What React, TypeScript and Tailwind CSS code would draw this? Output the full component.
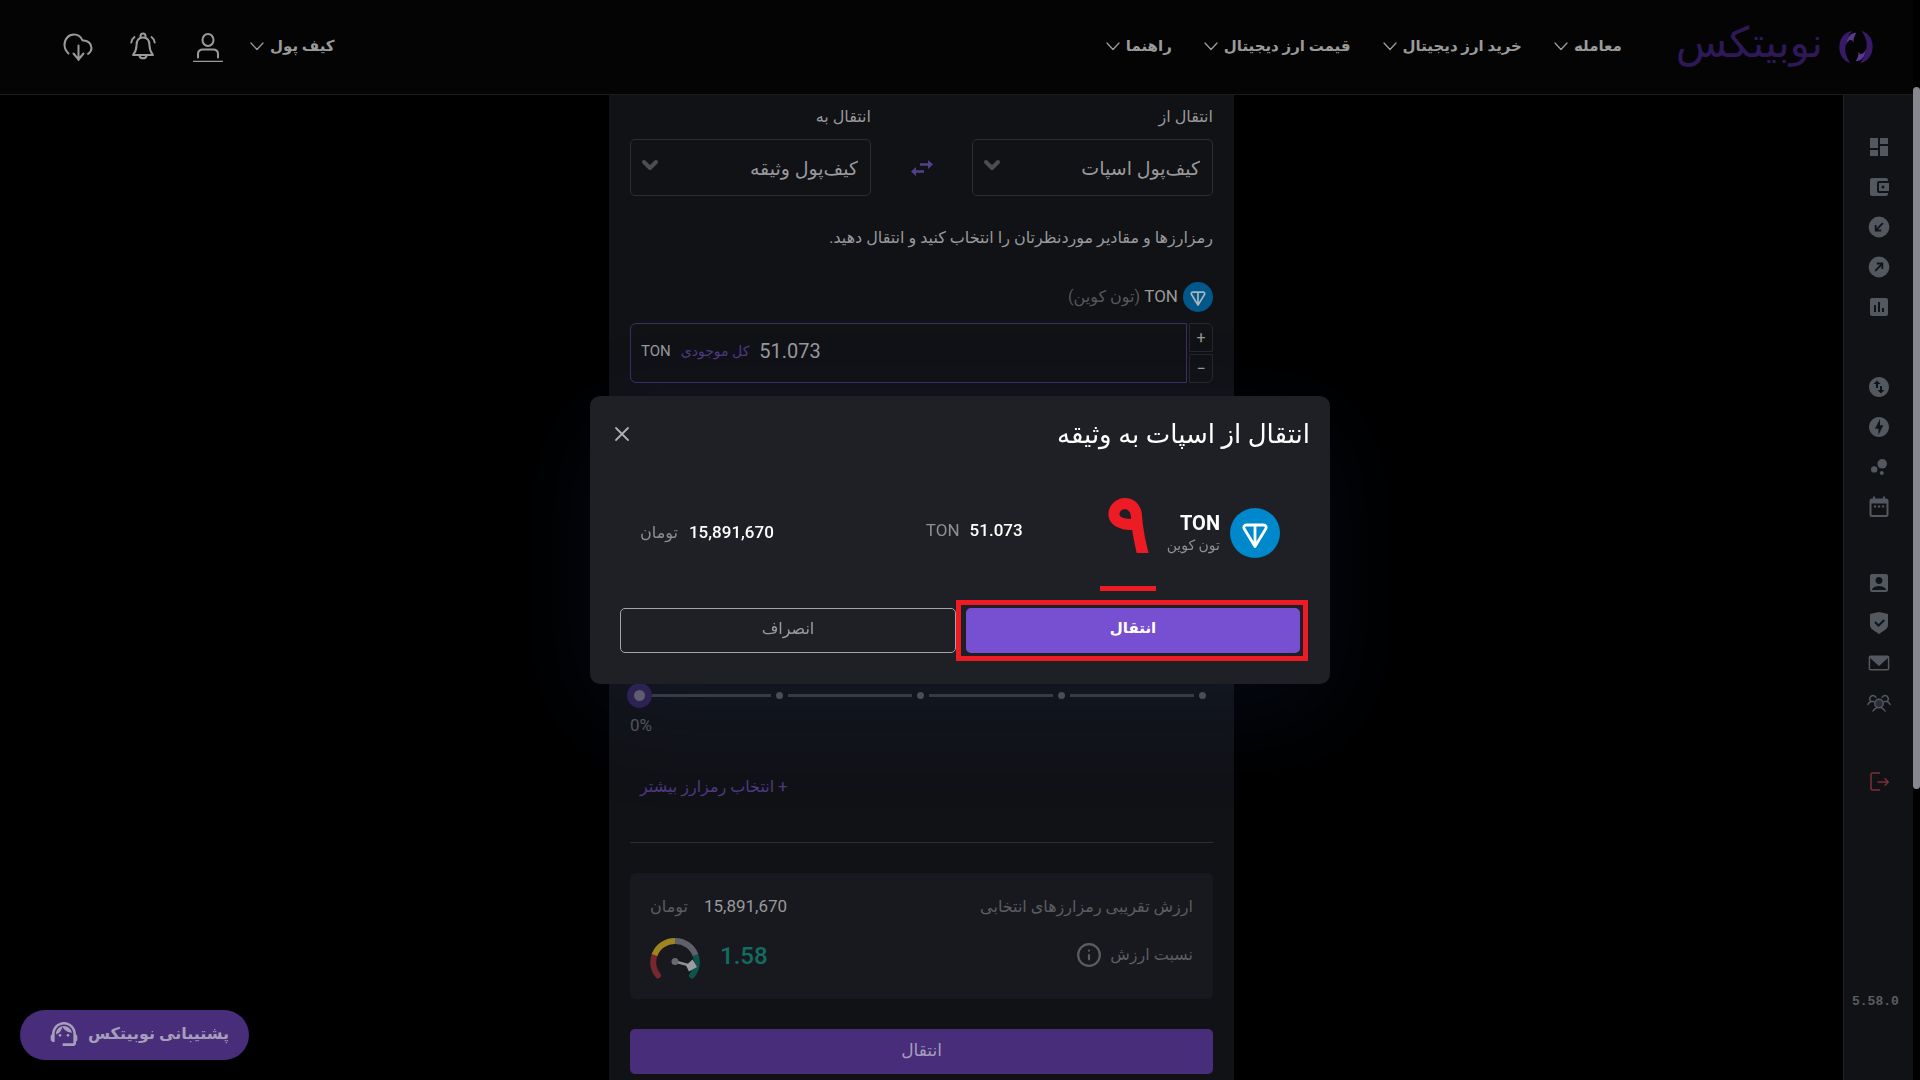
import type { ReactNode } from 'react'
import { ChevronDown, Info, X } from 'lucide-react'
import {
    MdAccountBalanceWallet,
    MdAccountBox,
    MdBubbleChart,
    MdDashboard,
    MdInsertChart,
    MdOfflineBolt,
    MdSupportAgent,
    MdSwapVerticalCircle,
} from 'react-icons/md'
import { RiShieldCheckFill } from 'react-icons/ri'

const navItems = ['معامله', 'خرید ارز دیجیتال', 'قیمت ارز دیجیتال', 'راهنما']

function LogoMark() {
    return (
        <svg viewBox="0 0 100 96" className="w-[34px] h-8" aria-hidden="true">
            {['', 'rotate(180 50 48)'].map((t) => (
                <g key={t} transform={t || undefined}>
                    <path d="M38 0C12 4 0 26 0 50c0 22 14 42 34 46C24 84 16 66 18 48 20 30 28 12 38 0Z" fill="#381a69" />
                    <path d="M51 5C34 5 22 18 20 44c3-12 9-18 16-17 4 1 4 6 8 7C40 26 46 14 51 5Z" fill="#58398c" />
                </g>
            ))}
        </svg>
    )
}

function MenuChevron() {
    return (
        <svg viewBox="0 0 14 9" className="w-[14px] h-[9px]" fill="none" stroke="currentColor" strokeWidth="1.300" strokeLinecap="round" strokeLinejoin="round">
            <path d="m1 1 6 6.500L13 1" />
        </svg>
    )
}

function CloudDownloadIcon() {
    return (
        <svg viewBox="0 0 30 30" className="size-[30px]" fill="none" stroke="currentColor" strokeWidth="2" strokeLinecap="round" strokeLinejoin="round">
            <path d="M5.500 21.500C3 19 1.500 16.500 1.500 13c0-6 4-10.500 9.500-10.500 4 0 7 2.200 8.500 6 5-.5 9 3 9 7.500 0 2.500-1.500 4.500-3.500 6" />
            <path d="M15.500 13.500V28M10.500 21.500l5 6 5-6" />
        </svg>
    )
}

function BellIcon() {
    return (
        <svg viewBox="0 0 30 30" className="size-[30px]" fill="none" stroke="currentColor" strokeWidth="2" strokeLinecap="round" strokeLinejoin="round">
            <path d="M15 5.500c-5 0-6.500 4-6.500 8 0 5-1.500 7-3.500 9.500h20c-2-2.500-3.500-4.500-3.500-9.500 0-4-1.500-8-6.500-8Z" />
            <path d="M12.500 5.500V4a2.500 2.500 0 0 1 5 0v1.500M11.500 24c.5 3 6.500 3 7 0M6.500 5C4.500 6.500 3.500 8 3.300 10.500M23.500 5c2 1.500 3 3 3.200 5.500" />
        </svg>
    )
}

function UserIcon() {
    return (
        <svg viewBox="0 0 30 30" className="size-[30px]" fill="none" stroke="currentColor" strokeWidth="2" strokeLinecap="round">
            <ellipse cx="15" cy="8" rx="5.500" ry="6" />
            <path d="M5 25.500V22c0-3 2-4.500 5-4.500h10c3 0 5 1.500 5 4.500v3.500" />
            <path d="M0 29.300h30" strokeWidth="1.200" />
        </svg>
    )
}

function CircleArrowIcon({ up = false }: { up?: boolean }) {
    return (
        <svg viewBox="0 0 24 24" className="size-6">
            <circle cx="12" cy="12" r="10.400" fill="currentColor" />
            <g fill="none" stroke="#111216" strokeWidth="1.800" transform={up ? 'rotate(180 12 12)' : undefined}>
                <path d="M15.800 8.200 8.700 15.300M8.700 10v5.500h5.500" />
            </g>
        </svg>
    )
}

function CalendarIcon() {
    return (
        <svg viewBox="0 0 24 24" className="size-6" fill="none" stroke="currentColor">
            <rect x="3.500" y="4.500" width="17" height="16.500" rx="1.500" strokeWidth="2" />
            <path d="M3 6.500h18" strokeWidth="4" />
            <path d="M7 1.500v3M17 1.500v3" strokeWidth="2" />
            <path d="M7 11.500h2.200M11 11.500h2.200M15 11.500h2.200" strokeWidth="2" />
        </svg>
    )
}

function MailIcon() {
    return (
        <svg viewBox="0 0 24 24" className="size-6">
            <rect x="2.400" y="5.300" width="19.200" height="13.400" rx="1" fill="none" stroke="currentColor" strokeWidth="1.500" />
            <path d="M3 5h18v2l-9 8-9-8Z" fill="currentColor" />
        </svg>
    )
}

function ReferralIcon() {
    return (
        <svg viewBox="0 0 24 24" className="size-6" fill="none" stroke="currentColor" strokeWidth="1.500" strokeLinecap="round">
            <circle cx="12" cy="12.500" r="4.200" fill="#2b2e34" />
            <path d="M6 20c1-2 2.500-3 4-3.300M18 20c-1-2-2.500-3-4-3.300" />
            <path d="M9 6.500A3.300 3.300 0 1 0 4 10.500h3M15 6.500a3.300 3.300 0 1 1 5 4h-3M4 10.500C2.500 11 1.500 12 .8 13.500M20 10.500c1.500.5 2.500 1.500 3.200 3" />
        </svg>
    )
}

function LogoutIcon() {
    return (
        <svg viewBox="0 0 24 24" className="size-6" fill="none" stroke="currentColor" strokeWidth="1.500" strokeLinecap="round" strokeLinejoin="round">
            <path d="M12.500 3H5.500A1.500 1.500 0 0 0 4 4.500v14A1.500 1.500 0 0 0 5.500 20h7M11 12h10M18 8.800l3.300 3.200-3.300 3.200" />
        </svg>
    )
}

function TonIcon({ dim = false }: { dim?: boolean }) {
    return (
        <svg viewBox="0 0 50 50" className="size-full" aria-hidden="true">
            <circle cx="25" cy="25" r="25" fill={dim ? '#02588a' : '#0088cc'} />
            <path
                d="M16.500 17h17c2.200 0 3.400 2 2.300 3.800L25 38.500 14.200 20.800C13.100 19 14.300 17 16.500 17ZM25 17v20"
                fill="none"
                stroke={dim ? '#a9b6bd' : '#fff'}
                strokeWidth="2.800"
                strokeLinejoin="round"
            />
        </svg>
    )
}

function SwapIcon() {
    return (
        <svg viewBox="0 0 22 16" className="w-[22px] h-4" fill="#54408a">
            <path d="M9 3.200h8V0l5 4.500L17 9V5.800H9ZM13 10.200H5V7L0 11.500 5 16v-3.200h8Z" />
        </svg>
    )
}

function Gauge() {
    return (
        <svg viewBox="0 0 50 42" className="w-[50px] h-[42px]" fill="none" strokeWidth="6" aria-hidden="true">
            <path d="M8 38.500A21.500 21.500 0 0 1 4.500 18" stroke="#77272f" strokeLinecap="round" />
            <path d="M42 38.500A21.500 21.500 0 0 0 45.500 18" stroke="#0f534b" strokeLinecap="round" />
            <path d="M4.500 18A21.500 21.500 0 0 1 25 4" stroke="#a08420" />
            <path d="M45.500 18A21.500 21.500 0 0 0 25 4" stroke="#5f6069" />
            <path d="M25 24.500 38 28" stroke="#8d8e91" strokeWidth="2.500" />
            <circle cx="25" cy="24.500" r="3.500" fill="#68696d" />
            <path d="M36 28.500l6.500-6L47 30l-8 4.500Z" fill="#9c9da0" />
        </svg>
    )
}

const sideGroups: { label: string; icon: ReactNode }[][] = [
    [
        { label: 'داشبورد', icon: <MdDashboard className="size-6" /> },
        { label: 'کیف پول', icon: <MdAccountBalanceWallet className="size-6" /> },
        { label: 'واریز', icon: <CircleArrowIcon /> },
        { label: 'برداشت', icon: <CircleArrowIcon up /> },
        { label: 'گزارش', icon: <MdInsertChart className="size-6" /> },
    ],
    [
        { label: 'تبدیل', icon: <MdSwapVerticalCircle className="size-6" /> },
        { label: 'معامله سریع', icon: <MdOfflineBolt className="size-6" /> },
        { label: 'استخر', icon: <MdBubbleChart className="size-6" /> },
        { label: 'تاریخچه', icon: <CalendarIcon /> },
    ],
    [
        { label: 'پروفایل', icon: <MdAccountBox className="size-6" /> },
        { label: 'امنیت', icon: <RiShieldCheckFill className="size-6" /> },
        { label: 'پیام‌ها', icon: <MailIcon /> },
        { label: 'معرفی دوستان', icon: <ReferralIcon /> },
    ],
]

function Header() {
    return (
        <header className="h-[95px] px-[47px] flex items-center border-b border-[#1b1c20] bg-[#040405] text-[#9a9a9b]">
            <a href="#" className="flex items-center gap-4 ml-[54px] text-[#2f1858]">
                <LogoMark />
                <span className="text-[42px] leading-[56px] pb-2">نوبیتکس</span>
            </a>
            <nav className="flex items-center gap-8 font-bold text-[15px] pb-[2px]">
                {navItems.map((item) => (
                    <a key={item} href="#" className="flex items-center gap-[6px]">
                        {item}
                        <MenuChevron />
                    </a>
                ))}
            </nav>
            <div className="mr-auto flex items-center gap-[35px] pl-4">
                <a href="#" className="flex items-center gap-[6px] font-bold text-[15px] -ml-2 pb-[2px]">
                    کیف پول
                    <MenuChevron />
                </a>
                <button aria-label="حساب کاربری"><UserIcon /></button>
                <button aria-label="اعلان‌ها"><BellIcon /></button>
                <button aria-label="دانلود"><CloudDownloadIcon /></button>
            </div>
        </header>
    )
}

function Sidebar() {
    return (
        <aside className="w-[70px] shrink-0 bg-[#111216] border-l border-[#222327] text-[#53575e] flex flex-col items-center pt-10 gap-[52px]">
            {sideGroups.map((group, i) => (
                <nav key={i} className="flex flex-col gap-4 first:mb-1">
                    {group.map(({ label, icon }) => (
                        <a key={label} href="#" aria-label={label}>{icon}</a>
                    ))}
                </nav>
            ))}
            <button aria-label="خروج" className="mt-[3px] text-[#7d2f37]"><LogoutIcon /></button>
            <span dir="ltr" className="mt-auto mb-[68px] self-end pl-2 font-['Liberation_Mono',monospace] font-bold text-[13px] leading-5 text-[#5c5d61]">5.58.0</span>
        </aside>
    )
}

function WalletSelect({ id, label, value }: { id: string; label: string; value: string }) {
    return (
        <div className="w-[241px]">
            <label htmlFor={id} className="block h-6 leading-6 text-base">{label}</label>
            <div className="relative mt-[10px]">
                <select id={id} className="appearance-none w-full h-[57px] px-3 pt-1 rounded-[5px] border border-[#2d2e33] bg-transparent text-[19px]">
                    <option>{value}</option>
                </select>
                <ChevronDown className="absolute left-2 top-[14px] size-6 text-[#4c4d51] pointer-events-none" strokeWidth={4} />
            </div>
        </div>
    )
}

function PercentSlider() {
    return (
        <div dir="ltr" className="relative h-[25px] mt-[300px] pl-3 pr-[7px] flex items-center">
            {[25, 50, 75, 100].map((stop) => (
                <div key={stop} className="flex-1 flex items-center gap-[5px] pl-[5px]">
                    <div className="flex-1 h-[3px] bg-[#3b3c43]" />
                    <div className="size-[7px] rounded-full bg-[#505157]" />
                </div>
            ))}
            <input
                type="range"
                min={0}
                max={100}
                step={25}
                defaultValue={0}
                aria-label="درصد انتقال"
                className="absolute inset-0 -left-[3px] h-[25px] appearance-none bg-transparent [&::-webkit-slider-thumb]:appearance-none [&::-webkit-slider-thumb]:size-[25px] [&::-webkit-slider-thumb]:rounded-full [&::-webkit-slider-thumb]:border-[7px] [&::-webkit-slider-thumb]:border-[#2f2151] [&::-webkit-slider-thumb]:bg-[#66626f]"
            />
        </div>
    )
}

function TransferCard() {
    return (
        <section className="w-[625px] bg-[#111216] px-[21px] pt-[10px] pb-[6px] text-[#99999b]">
            <div className="flex justify-between">
                <WalletSelect id="from" label="انتقال از" value="کیف‌پول اسپات" />
                <button aria-label="جابجایی" className="mt-[34px] h-[57px]"><SwapIcon /></button>
                <WalletSelect id="to" label="انتقال به" value="کیف‌پول وثیقه" />
            </div>

            <p className="mt-[30px] h-6 leading-6 text-base">رمزارزها و مقادیر موردنظرتان را انتخاب کنید و انتقال دهید.</p>

            <div className="mt-8 h-[30px] flex items-center gap-[5px]">
                <span className="size-[30px]"><TonIcon dim /></span>
                <label htmlFor="amount" className="text-[17px]">
                    TON <span className="text-base text-[#56575b]">(تون کوین)</span>
                </label>
            </div>
            <div className="mt-[11px] h-[60px] flex gap-[2px]">
                <div className="w-6 flex flex-col gap-[2px] leading-none">
                    <button aria-label="افزایش" className="flex-1 border border-[#26272b] rounded-tr-md">+</button>
                    <button aria-label="کاهش" className="flex-1 border border-[#26272b] rounded-br-md">−</button>
                </div>
                <div dir="ltr" className="flex-1 flex items-center gap-[10px] pl-[10px] pb-1 border border-[#3d2c68] rounded-l-md">
                    <span className="text-[15px]">TON</span>
                    <button className="text-sm text-[#4f3a82]">کل موجودی</button>
                    <input id="amount" defaultValue="51.073" className="flex-1 min-w-0 bg-transparent text-xl outline-none" />
                </div>
            </div>

            <PercentSlider />
            <div dir="ltr" className="mt-[5px] h-6 leading-6 text-[17px] text-[#56575b]">0%</div>
            <div className="mt-[38px] h-6 pl-[10px] flex justify-end">
                <button className="text-base text-[#4f3a82]">+ انتخاب رمزارز بیشتر</button>
            </div>
            <hr className="mt-[43px] border-[#2d2e33]" />

            <dl className="mt-[30px] h-[126px] px-5 pt-[22px] rounded-md bg-[#18191e] text-base text-[#5c5d61]">
                <div className="h-6 flex items-center justify-between">
                    <dt>ارزش تقریبی رمزارزهای انتخابی</dt>
                    <dd className="flex items-center gap-4">
                        <span className="text-[17px] text-[#99999b]">15,891,670</span>
                        تومان
                    </dd>
                </div>
                <div className="mt-[14px] h-[50px] flex items-center justify-between">
                    <dt className="flex items-center gap-2 pb-[6px]">
                        نسبت ارزش
                        <Info className="size-[26px]" strokeWidth={2} />
                    </dt>
                    <dd className="flex items-center gap-5">
                        <span className="pb-1 text-2xl font-medium text-[#126c60]">1.58</span>
                        <Gauge />
                    </dd>
                </div>
            </dl>

            <button className="mt-[30px] w-full h-[45px] pb-[2px] rounded-[5px] bg-[#482d7a] text-[#a79ebb] text-[17px]">انتقال</button>
        </section>
    )
}

function ConfirmModal() {
    return (
        <div className="fixed inset-0 flex items-center justify-center">
            <div
                role="dialog"
                aria-labelledby="confirm-title"
                className="w-[740px] rounded-[10px] bg-[#1f2025] px-5 pt-4 pb-[31px] shadow-[0_30px_100px_rgba(30,55,120,0.16)]"
            >
                <div className="h-11 flex items-center justify-between">
                    <h2 id="confirm-title" className="text-[26px] leading-9 font-medium text-white">انتقال از اسپات به وثیقه</h2>
                    <button aria-label="بستن" className="text-[#b0b0b3]"><X className="size-6" strokeWidth={1.8} /></button>
                </div>

                <div className="relative mt-[52px] h-[50px] px-[30px] flex items-center justify-between text-[#8e8f93]">
                    <div className="flex items-center gap-[10px]">
                        <span className="size-[50px]"><TonIcon /></span>
                        <div>
                            <div className="text-xl leading-6 font-bold text-white">TON</div>
                            <div className="text-sm leading-5">تون کوین</div>
                        </div>
                    </div>
                    <div className="flex items-center gap-[10px] pb-1 pl-2 text-[17px]">
                        <span className="font-medium text-white">51.073</span>
                        <span>TON</span>
                    </div>
                    <div className="flex items-center gap-[11px]">
                        <span className="text-[17px] font-medium text-white">15,891,670</span>
                        <span className="text-base">تومان</span>
                    </div>
                    <div className="absolute right-[154px] -top-[22px] w-14 h-[105px] flex justify-center border-b-5 border-[#ed1c24] text-[#ed1c24] text-[80px] leading-[76px] [-webkit-text-stroke:4px_#ed1c24]">۹</div>
                </div>

                <div className="mt-[50px] px-[10px] flex gap-[10px]">
                    <div className="relative flex-1">
                        <button className="block w-full h-[45px] pb-1 rounded-[5px] bg-[#774fd1] text-white text-[15px] font-bold">انتقال</button>
                        <div className="absolute -inset-y-2 -right-2 -left-[10px] border-5 border-[#ed1c24] pointer-events-none" />
                    </div>
                    <button className="flex-1 h-[45px] pb-1 rounded-[5px] border border-[#a5a5a8] text-base text-[#9d9da0]">انصراف</button>
                </div>
            </div>
        </div>
    )
}

export default function App() {
    return (
        <div dir="rtl" className="min-h-screen flex flex-col bg-black font-[Roboto,'DejaVu_Sans',sans-serif]">
            <Header />
            <div className="flex-1 flex pr-[7px]">
                <Sidebar />
                <main className="flex-1 flex justify-center">
                    <TransferCard />
                </main>
            </div>
            <button className="fixed left-5 bottom-5 h-[50px] pr-5 pl-[28px] pb-[2px] flex items-center gap-2 rounded-full bg-[#482d7a] text-[#a79ebb] text-base font-bold">
                پشتیبانی نوبیتکس
                <MdSupportAgent className="size-8" />
            </button>
            <div className="fixed right-0 inset-y-0 w-[7px] bg-black">
                <div className="mt-[87px] h-[65%] rounded-full bg-[#87888f]" />
            </div>
            <ConfirmModal />
        </div>
    )
}
